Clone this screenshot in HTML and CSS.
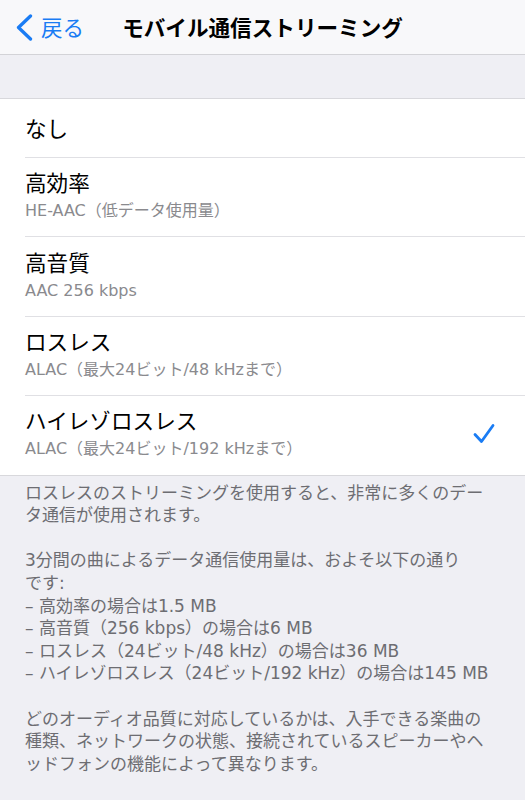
FILE: index.html
```html
<!DOCTYPE html>
<html lang="ja">
<head>
<meta charset="utf-8">
<title>モバイル通信ストリーミング</title>
<link rel="stylesheet" href="styles.css">
</head>
<body>
<header class="navbar">
  <div class="nav-back">
    <svg class="chevron" width="17" height="27" viewBox="0 0 17 27"><polyline points="14.5,2 2.5,13.5 14.5,25" fill="none" stroke="#1a7cf4" stroke-width="3.3" stroke-linecap="round" stroke-linejoin="round"/></svg>
    <span class="back-label">戻る</span>
  </div>
  <h1 class="nav-title">モバイル通信ストリーミング</h1>
  <div class="nav-spacer"></div>
</header>

<main class="content">
  <ul class="group">
    <li class="row">
      <div class="row-inner row-single">
        <div class="row-text"><div class="row-title">なし</div></div>
      </div>
    </li>
    <li class="row">
      <div class="row-inner">
        <div class="row-text">
          <div class="row-title">高効率</div>
          <div class="row-sub">HE-AAC（低データ使用量）</div>
        </div>
      </div>
    </li>
    <li class="row">
      <div class="row-inner">
        <div class="row-text">
          <div class="row-title">高音質</div>
          <div class="row-sub">AAC 256 kbps</div>
        </div>
      </div>
    </li>
    <li class="row">
      <div class="row-inner">
        <div class="row-text">
          <div class="row-title">ロスレス</div>
          <div class="row-sub">ALAC（最大24ビット/48 kHzまで）</div>
        </div>
      </div>
    </li>
    <li class="row">
      <div class="row-inner row-last">
        <div class="row-text">
          <div class="row-title">ハイレゾロスレス</div>
          <div class="row-sub">ALAC（最大24ビット/192 kHzまで）</div>
        </div>
        <svg class="check" width="24" height="22" viewBox="0 0 24 22"><polyline points="3,11.5 9.5,18.5 21,2.5" fill="none" stroke="#1a7cf4" stroke-width="2.8" stroke-linecap="round" stroke-linejoin="round"/></svg>
      </div>
    </li>
  </ul>

  <div class="footer">
    <p class="footer-p">ロスレスのストリーミングを使用すると、非常に多くのデー<br>タ通信が使用されます。</p>
    <p class="footer-p">3分間の曲によるデータ通信使用量は、およそ以下の通り<br>です:<br>– 高効率の場合は1.5 MB<br>– 高音質（256 kbps）の場合は6 MB<br>– ロスレス（24ビット/48 kHz）の場合は36 MB<br>– ハイレゾロスレス（24ビット/192 kHz）の場合は145 MB</p>
    <p class="footer-p">どのオーディオ品質に対応しているかは、入手できる楽曲の<br>種類、ネットワークの状態、接続されているスピーカーやヘ<br>ッドフォンの機能によって異なります。</p>
  </div>
</main>
</body>
</html>
```

FILE: styles.css
```css
* { box-sizing: border-box; }

html, body {
  margin: 0;
  padding: 0;
}

body {
  background: #efeff4;
  font-family: "DejaVu Sans", "Noto Sans CJK JP", sans-serif;
  color: #000;
  width: 525px;
  height: 800px;
  overflow: hidden;
}

.navbar {
  height: 55px;
  background: #f8f8fa;
  border-bottom: 1px solid #d3d3d7;
  display: grid;
  grid-template-columns: 1fr auto 1fr;
  align-items: center;
}

.nav-back {
  display: flex;
  align-items: center;
  padding-left: 16px;
  gap: 8px;
  color: #1a7cf4;
}

.chevron {
  display: block;
}

.back-label {
  font-family: "Noto Sans CJK JP", sans-serif;
  font-size: 21.5px;
  line-height: 26px;
}

.nav-title {
  margin: 0;
  font-family: "Noto Sans CJK JP", sans-serif;
  font-size: 21.6px;
  font-weight: 700;
  line-height: 26px;
  letter-spacing: 0;
}

.content {
  padding-top: 43px;
}

.group {
  list-style: none;
  margin: 0;
  padding: 0;
  background: #fff;
  border-top: 1px solid #d8d8dc;
  border-bottom: 1px solid #d8d8dc;
}

.row {
  padding-left: 25px;
}

.row-inner {
  display: flex;
  align-items: center;
  justify-content: space-between;
  min-height: 79.4px;
  padding: 11px 30px 14px 0;
  border-bottom: 1px solid #e0e0e4;
}

.row-single {
  min-height: 59px;
  padding-top: 0;
  padding-bottom: 0;
}

.row-last {
  border-bottom: none;
  min-height: 78.4px;
}

.row-title {
  font-family: "Noto Sans CJK JP", sans-serif;
  font-size: 21.6px;
  line-height: 26px;
}

.row-sub {
  margin-top: 5px;
  font-size: 16px;
  line-height: 22px;
  color: #8a8a8e;
}

.check {
  display: block;
  margin-right: -1px;
}

.footer {
  padding: 6px 25px 0 25px;
  color: #6d6d72;
  font-size: 17px;
  line-height: 22.6px;
}

.footer-p {
  margin: 0 0 22.6px 0;
}
```
